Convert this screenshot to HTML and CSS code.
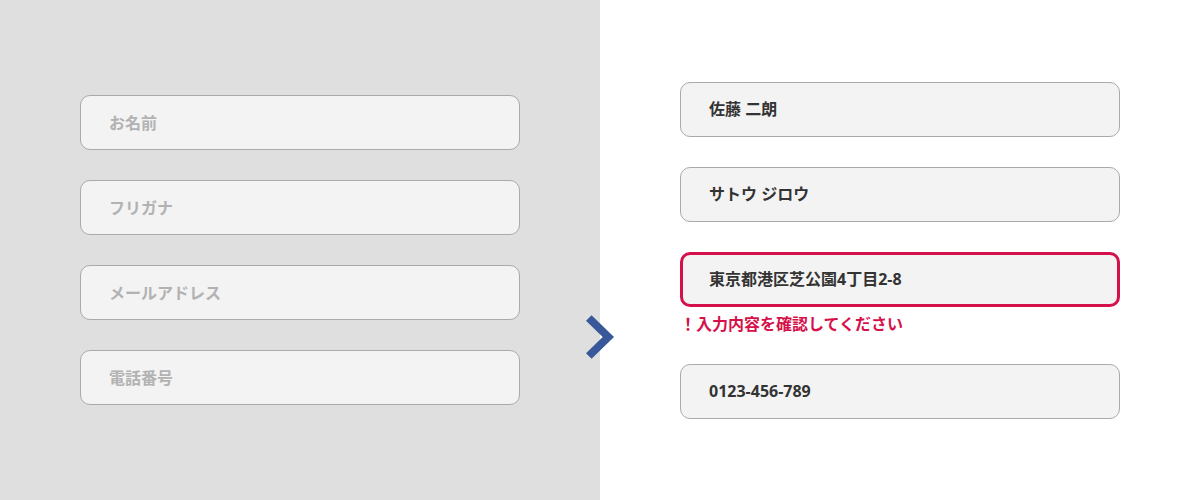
FILE: index.html
```html
<!DOCTYPE html>
<html lang="ja">
<head>
<meta charset="utf-8">
<link rel="stylesheet" href="styles.css">
</head>
<body>
<main class="stage">
  <section class="panel panel-before">
    <div class="field placeholder">お名前</div>
    <div class="field placeholder">フリガナ</div>
    <div class="field placeholder">メールアドレス</div>
    <div class="field placeholder">電話番号</div>
  </section>
  <section class="panel panel-after">
    <div class="field filled">佐藤 二朗</div>
    <div class="field filled">サトウ ジロウ</div>
    <div class="group">
      <div class="field filled error">東京都港区芝公園4丁目2-8</div>
      <p class="error-msg">！入力内容を確認してください</p>
    </div>
    <div class="field filled">0123-456-789</div>
  </section>
  <svg class="arrow" width="32" height="48" viewBox="0 0 32 48" aria-hidden="true">
    <polyline points="4.8,5 24.3,24 4.8,43" fill="none" stroke="#38589a" stroke-width="8" stroke-linejoin="miter" stroke-linecap="butt"/>
  </svg>
</main>
</body>
</html>
```
FILE: styles.css
```css
* { box-sizing: border-box; }
html, body { margin: 0; padding: 0; }
body {
  width: 1200px;
  height: 500px;
  font-family: "Noto Sans", "Noto Sans CJK JP", sans-serif;
  font-weight: 700;
  font-size: 16px;
}
.stage {
  position: relative;
  display: flex;
  width: 1200px;
  height: 500px;
}
.panel {
  width: 600px;
  height: 500px;
  display: flex;
  flex-direction: column;
  justify-content: center;
  align-items: center;
  gap: 30px;
}
.panel-before { background: #dfdfdf; }
.panel-after { background: #ffffff; }
.field {
  width: 440px;
  height: 55px;
  border: 1px solid #aaaaaa;
  border-radius: 10px;
  background: #f3f3f3;
  display: flex;
  align-items: center;
  padding-left: 28px;
  line-height: 1;
}
.placeholder { color: #b2b2b2; }
.filled { color: #333333; }
.field.error {
  border: 3px solid #d6104b;
  padding-left: 26px;
}
.group {
  display: flex;
  flex-direction: column;
}
.error-msg {
  margin: 8px 0 0;
  line-height: 19px;
  height: 19px;
  color: #d6104b;
  font-size: 16px;
}
.arrow {
  position: absolute;
  left: 584px;
  top: 313px;
}
```
